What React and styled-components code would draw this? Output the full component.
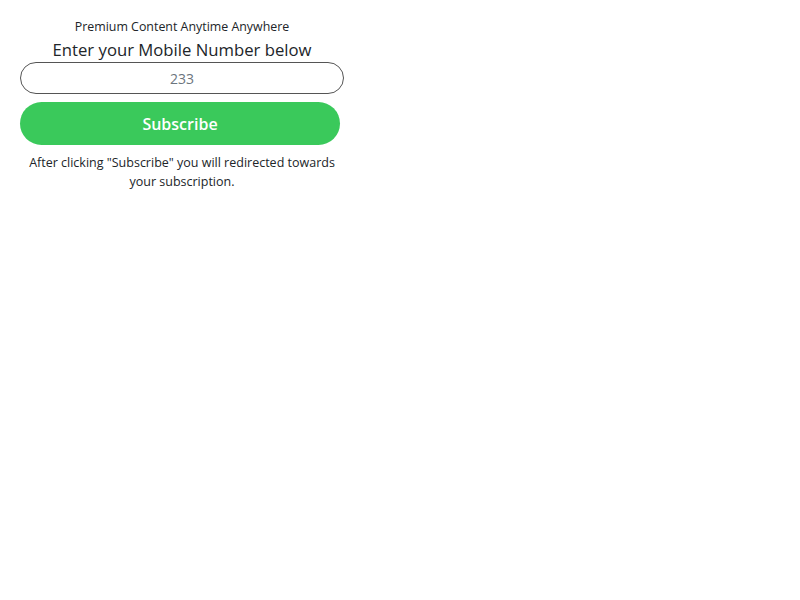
import React, { useState } from 'react';
import styled, { createGlobalStyle } from 'styled-components';

const GlobalStyle = createGlobalStyle`
  body {
    margin: 0;
    background: #ffffff;
    font-family: 'Open Sans', 'Noto Sans', sans-serif;
    color: #212529;
  }
`;

const Wrapper = styled.div`
  width: 324px;
  margin-left: 20px;
  padding-top: 17px;
  display: flex;
  flex-direction: column;
  align-items: center;
`;

const Tagline = styled.p`
  margin: 0;
  font-size: 12.4px;
  line-height: 20px;
  text-align: center;
`;

const Heading = styled.h2`
  margin: 0;
  font-size: 16.7px;
  font-weight: 400;
  line-height: 25px;
  text-align: center;
`;

const NumberInput = styled.input`
  box-sizing: border-box;
  width: 324px;
  height: 32px;
  border: 1px solid #555;
  border-radius: 16px;
  text-align: center;
  font-family: inherit;
  font-size: 14px;
  color: #495057;
  outline: none;

  &::placeholder {
    color: #6c757d;
  }
`;

const SubscribeButton = styled.button`
  box-sizing: border-box;
  align-self: flex-start;
  width: 320px;
  height: 43px;
  margin-top: 8px;
  border: none;
  border-radius: 22px;
  background: #3ac95b;
  color: #fff;
  font-family: inherit;
  font-size: 16px;
  font-weight: 600;
  cursor: pointer;
`;

const Note = styled.p`
  margin: 8px 0 0;
  font-size: 12.5px;
  line-height: 19px;
  text-align: center;
`;

function App() {
  const [number, setNumber] = useState('');

  return (
    <>
      <GlobalStyle />
      <Wrapper>
        <Tagline>Premium Content Anytime Anywhere</Tagline>
        <Heading>Enter your Mobile Number below</Heading>
        <NumberInput
          type="tel"
          placeholder="233"
          value={number}
          onChange={(e) => setNumber(e.target.value)}
        />
        <SubscribeButton>Subscribe</SubscribeButton>
        <Note>
          After clicking "Subscribe" you will redirected towards
          <br />
          your subscription.
        </Note>
      </Wrapper>
    </>
  );
}

export default App;
